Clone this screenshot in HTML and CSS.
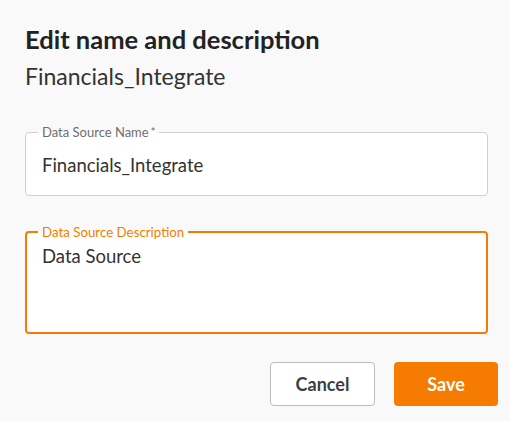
FILE: index.html
```html
<!DOCTYPE html>
<html lang="en">
<head>
<meta charset="UTF-8">
<title>Edit name and description</title>
<link rel="stylesheet" href="styles.css">
</head>
<body>

<!-- EDIT DIALOG -->
<div class="dialog">
    <h2 class="dialog-title">Edit name and description</h2>
    <p class="dialog-subtitle">Financials_Integrate</p>

    <fieldset class="field">
        <legend class="field-label">Data Source Name<span class="req">*</span></legend>
        <div class="field-value">Financials_Integrate</div>
    </fieldset>

    <fieldset class="field field-focused">
        <legend class="field-label">Data Source Description</legend>
        <div class="field-value field-area">Data Source</div>
    </fieldset>

    <div class="dialog-actions">
        <button class="btn btn-cancel">Cancel</button>
        <button class="btn btn-save">Save</button>
    </div>
</div>

</body>
</html>
```

FILE: styles.css
```css
body {
    margin: 0;
    background: #f9f9f9;
    font-family: 'Lato', 'Open Sans', sans-serif;
    color: #333;
}

.dialog {
    padding: 22px 12px 16px 25px;
}

.dialog-title {
    margin: 0;
    font-size: 25.5px;
    font-weight: bold;
    color: #222;
    line-height: 34px;
}

.dialog-subtitle {
    margin: 5px 0 0;
    font-size: 23px;
    line-height: 30px;
    color: #333;
}

/* OUTLINED FIELDS */
.field {
    margin: 33px 10px 0 0;
    padding: 0 12px;
    border: 1px solid #cfcfcf;
    border-radius: 4px;
    background: #fff;
    min-width: 0;
}

.field-label {
    padding: 0 4px;
    font-size: 13px;
    line-height: 16px;
    color: #6e6e6e;
}

.req {
    margin-left: 2px;
    font-size: 11px;
    vertical-align: top;
}

.field-value {
    padding: 13px 4px 18px;
    font-size: 18.5px;
    line-height: 24px;
    color: #333;
}

.field-focused {
    margin-top: 28px;
    border: 2px solid #f57c00;
    padding: 0 11px;
}

.field-focused .field-label {
    font-size: 13.3px;
    color: #f57c00;
}

.field-area {
    padding-top: 4px;
    padding-bottom: 0;
    height: 92px;
    box-sizing: border-box;
}

/* BUTTONS */
.dialog-actions {
    display: flex;
    justify-content: flex-end;
    gap: 19px;
    margin-top: 28px;
}

.btn {
    height: 44px;
    border-radius: 4px;
    font-family: inherit;
    font-size: 18px;
    font-weight: bold;
    cursor: pointer;
}

.btn-cancel {
    width: 105px;
    background: #fff;
    border: 1px solid #bcbcbc;
    color: #3a3f45;
}

.btn-save {
    width: 104px;
    background: #f57c00;
    border: none;
    color: #fff;
}
```
